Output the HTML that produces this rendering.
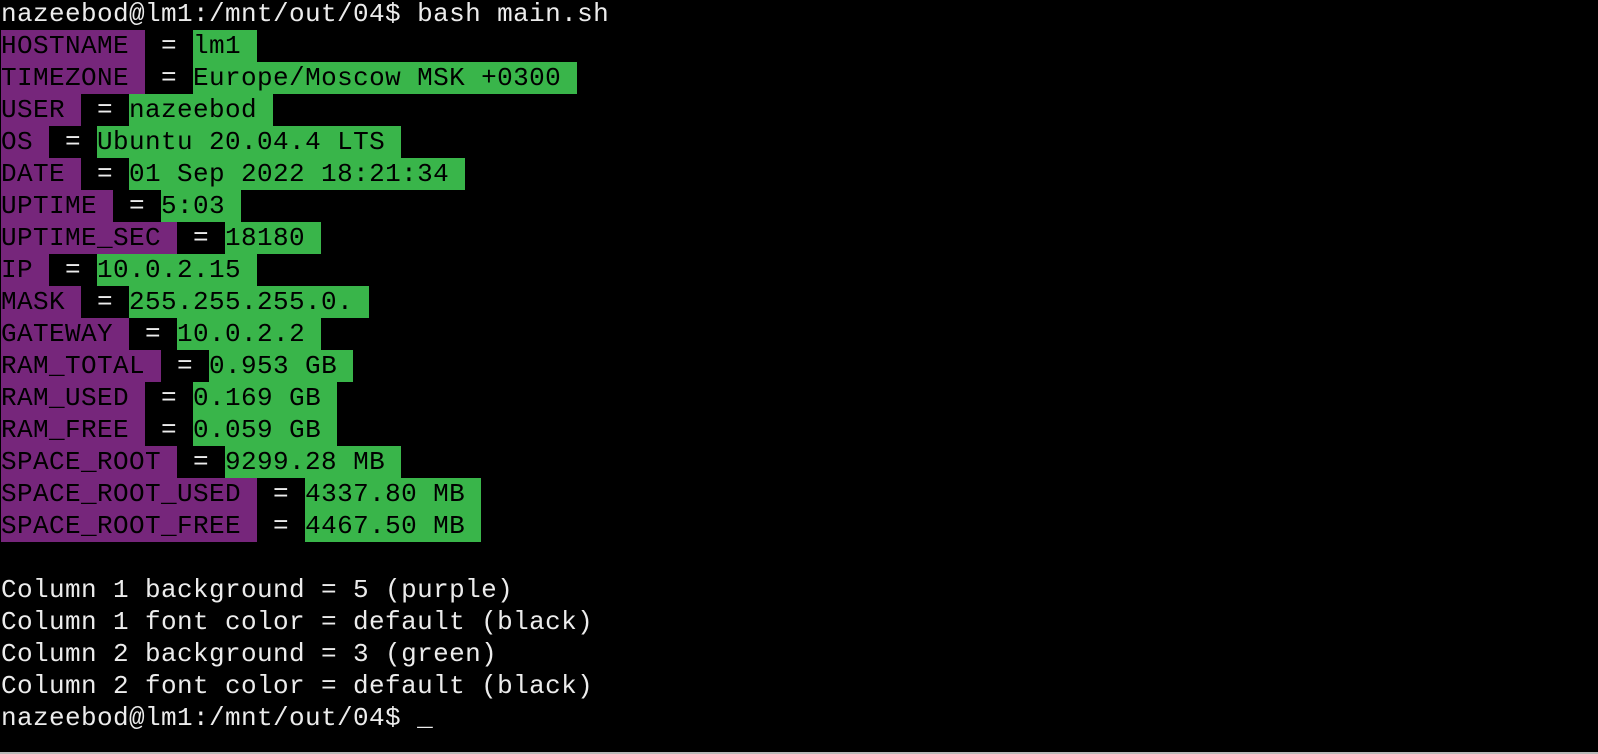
<!DOCTYPE html>
<html><head><meta charset="utf-8"><style>
html,body{margin:0;padding:0;background:#000;width:1598px;height:754px;overflow:hidden}
.t{position:absolute;left:1px;top:-2px;font-family:"Liberation Mono","DejaVu Sans Mono",monospace;font-size:26px;color:#ececec;letter-spacing:0.4px}
.l{display:block;height:32px;line-height:32px;white-space:pre}
.l span{display:inline-block;height:32px;vertical-align:top}
.p{background:#76267b;color:#000}
.g{background:#39b54a;color:#000}
.b{position:absolute;left:0;top:752px;width:1598px;height:2px;background:#b8b8b8}
</style></head><body><div class="t">
<div class="l">nazeebod@lm1:/mnt/out/04$ bash main.sh</div>
<div class="l"><span class="p">HOSTNAME </span> = <span class="g">lm1 </span></div>
<div class="l"><span class="p">TIMEZONE </span> = <span class="g">Europe/Moscow MSK +0300 </span></div>
<div class="l"><span class="p">USER </span> = <span class="g">nazeebod </span></div>
<div class="l"><span class="p">OS </span> = <span class="g">Ubuntu 20.04.4 LTS </span></div>
<div class="l"><span class="p">DATE </span> = <span class="g">01 Sep 2022 18:21:34 </span></div>
<div class="l"><span class="p">UPTIME </span> = <span class="g">5:03 </span></div>
<div class="l"><span class="p">UPTIME_SEC </span> = <span class="g">18180 </span></div>
<div class="l"><span class="p">IP </span> = <span class="g">10.0.2.15 </span></div>
<div class="l"><span class="p">MASK </span> = <span class="g">255.255.255.0. </span></div>
<div class="l"><span class="p">GATEWAY </span> = <span class="g">10.0.2.2 </span></div>
<div class="l"><span class="p">RAM_TOTAL </span> = <span class="g">0.953 GB </span></div>
<div class="l"><span class="p">RAM_USED </span> = <span class="g">0.169 GB </span></div>
<div class="l"><span class="p">RAM_FREE </span> = <span class="g">0.059 GB </span></div>
<div class="l"><span class="p">SPACE_ROOT </span> = <span class="g">9299.28 MB </span></div>
<div class="l"><span class="p">SPACE_ROOT_USED </span> = <span class="g">4337.80 MB </span></div>
<div class="l"><span class="p">SPACE_ROOT_FREE </span> = <span class="g">4467.50 MB </span></div>
<div class="l"> </div>
<div class="l">Column 1 background = 5 (purple)</div>
<div class="l">Column 1 font color = default (black)</div>
<div class="l">Column 2 background = 3 (green)</div>
<div class="l">Column 2 font color = default (black)</div>
<div class="l">nazeebod@lm1:/mnt/out/04$ _</div>
</div><div class="b"></div></body></html>
